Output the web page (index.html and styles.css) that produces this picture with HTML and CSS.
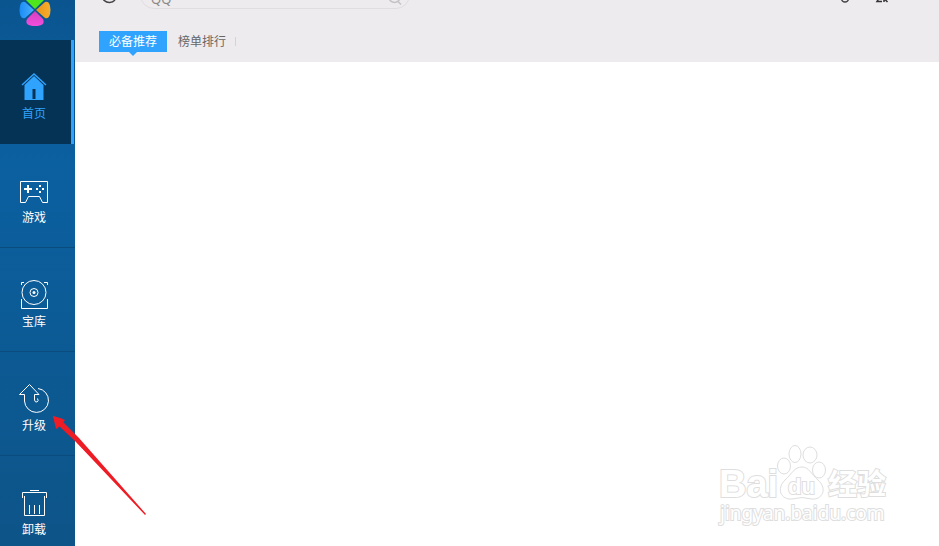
FILE: index.html
```html
<!DOCTYPE html>
<html lang="zh-CN">
<head>
    <meta charset="UTF-8">
    <meta name="viewport" content="width=device-width, initial-scale=1.0">
    <title>必备推荐</title>
    <link rel="stylesheet" href="styles.css">
</head>
<body>
    <div class="app">
        <nav class="sidebar">
            <div class="logo">
                <svg width="36" height="36" viewBox="0 0 36 36">
                    <defs>
                        <linearGradient id="blue"><stop offset="0" stop-color="#1c8cf5"/><stop offset="1" stop-color="#49b0ff"/></linearGradient>
                        <linearGradient id="orange"><stop offset="0" stop-color="#e8951a"/><stop offset="1" stop-color="#f8ad2c"/></linearGradient>
                        <linearGradient id="pink" x2="0" y2="1"><stop offset="0" stop-color="#d63fbf"/><stop offset="1" stop-color="#f04fdc"/></linearGradient>
                    </defs>
                    <path fill="#4fe61c" d="M18 19 L9 10 Q6 3 18 2 Q30 3 27 10 Z"/>
                    <path fill="url(#blue)" d="M17 20 L8 28 Q3 30 2.500 20 Q3 10 8 12 Z"/>
                    <path fill="url(#orange)" d="M19 20 L28 12 Q33 10 33.500 20 Q33 30 28 28 Z"/>
                    <path fill="url(#pink)" d="M18 21 L26 29 Q29 36 18 36 Q7 36 10 29 Z"/>
                </svg>
            </div>
            <a class="nav-item active" href="#home">
                <svg width="30" height="30" viewBox="0 0 30 30">
                    <path fill="none" stroke="#30a3ff" stroke-width="1.500" d="M3 13 L15 2 L27 13"/>
                    <path fill="#30a3ff" d="M15 4 L24.500 13 V28 H5.500 V13 Z"/>
                    <path fill="#043356" d="M13.500 17 H16.500 V27 H13.500 Z"/>
                </svg>
                <span>首页</span>
            </a>
            <a class="nav-item" href="#games">
                <svg width="30" height="30" viewBox="0 0 30 30">
                    <path fill="none" stroke="#fff" d="M1.500 5.500 H28.500 V26.500 H23.500 L20.500 20.500 H9.500 L6.500 26.500 H1.500 Z"/>
                    <path fill="#fff" d="M8 9 h2 v3 h3 v2 h-3 v3 h-2 v-3 h-3 v-2 h3z M20 9 h2 v2 h-2z M20 15 h2 v2 h-2z M17 12 h2 v2 h-2z M23 12 h2 v2 h-2z"/>
                </svg>
                <span>游戏</span>
            </a>
            <a class="nav-item" href="#library">
                <svg width="30" height="30" viewBox="0 0 30 30">
                    <g fill="none" stroke="#fff">
                        <circle cx="15" cy="12.500" r="12"/>
                        <circle cx="15" cy="12.500" r="4"/>
                        <path d="M2.500 5 V2.500 H5 M25 2.500 H28.500 V5 M2.500 19 V28.500 H28.500 V19"/>
                    </g>
                    <circle cx="15" cy="12.500" r="1.500" fill="#fff"/>
                </svg>
                <span>宝库</span>
            </a>
            <a class="nav-item" href="#upgrade">
                <svg width="30" height="30" viewBox="0 0 30 30">
                    <path fill="none" stroke="#fff" d="M19 4.500 A12 12 0 1 1 5.500 17 V10.500 H0.500 L10.500 0.500 L20 10.500 H15.500 V16 Q16 18.500 18 18 Q20 17 18.500 14.500"/>
                </svg>
                <span>升级</span>
            </a>
            <a class="nav-item" href="#uninstall">
                <svg width="30" height="30" viewBox="0 0 30 30">
                    <path fill="none" stroke="#fff" d="M11 2.500 H20 M3.500 10 V4.500 H27.500 V10 M5.500 8 V27.500 H25.500 V8 M10.500 17 V26 M15.500 17 V26 M20.500 17 V26"/>
                </svg>
                <span>卸载</span>
            </a>
        </nav>
        <main class="main">
            <header class="header">
                <div class="toolbar">
                    <button class="icon-btn" type="button" aria-label="刷新">
                        <svg width="18" height="20" viewBox="0 0 18 20">
                            <path fill="none" stroke="#444" stroke-width="1.500" d="M15 5 A7.500 7.500 0 1 0 15 15"/>
                        </svg>
                    </button>
                    <div class="search">
                        <input type="text" value="QQ" aria-label="搜索">
                        <svg width="14" height="14" viewBox="0 0 14 14">
                            <path fill="none" stroke="#c4c3c6" stroke-width="1.500" d="M10 9.500 L13 12.500 M1 5 a5.500 5.500 0 1 0 11 0 a5.500 5.500 0 1 0 -11 0"/>
                        </svg>
                    </div>
                    <div class="tools">
                        <button class="icon-btn" type="button" aria-label="消息">
                            <svg width="14" height="16" viewBox="0 0 14 16">
                                <circle cx="8" cy="11.500" r="3.500" fill="none" stroke="#444" stroke-width="1.500"/>
                            </svg>
                        </button>
                        <button class="icon-btn" type="button" aria-label="下载">
                            <svg width="14" height="16" viewBox="0 0 14 16">
                                <path fill="none" stroke="#333" stroke-width="1.500" d="M6 8 L2 14.500 H7 M9 11 V15 M9 13 H10.500 L12.500 15 M10.500 13 L12.500 11"/>
                            </svg>
                        </button>
                    </div>
                </div>
                <div class="tabs">
                    <a class="tab selected" href="#recommend">必备推荐</a>
                    <a class="tab" href="#rank">榜单排行</a>
                </div>
            </header>
        </main>
        <svg class="arrow" width="94" height="100" viewBox="0 0 94 100">
            <path fill="#ee1c25" d="M1 1 L11 4 L10 6 L27 23 L94 99 L93 100 L23 26 L7 11 L5 14 Z"/>
            <path fill="#ee1c25" d="M1 1 L13 5 L9 10 L4 14 Z"/>
        </svg>
        <svg class="watermark" width="180" height="90" viewBox="0 0 180 90">
            <g class="paw">
                <ellipse cx="69" cy="26" rx="6.500" ry="8"/>
                <ellipse cx="80" cy="14" rx="6" ry="8.500"/>
                <ellipse cx="95" cy="15" rx="7" ry="8"/>
                <ellipse cx="104" cy="30" rx="6.500" ry="8"/>
                <path d="M87 27 C94 27 96 34 103 40 C113 49 107 60 97 59 Q87 56 77 59 C66 60 61 49 70 40 C77 34 79 27 87 27 Z"/>
            </g>
            <text class="brand" x="4" y="57">Bai</text>
            <text class="du" x="73" y="54">du</text>
            <text class="brand-cn" x="113" y="55">经验</text>
            <text class="site" x="5" y="80">jingyan.baidu.com</text>
        </svg>
    </div>
</body>
</html>
```

FILE: styles.css
```css
* {
    box-sizing: border-box;
}
body {
    margin: 0;
    font-family: "Liberation Sans", "Noto Sans CJK SC", sans-serif;
    font-size: 12px;
    background: #fff;
}
.app {
    position: relative;
    display: flex;
    height: 100vh;
    overflow: hidden;
}
.sidebar {
    flex: 0 0 75px;
    background: linear-gradient(#0a5590, #0b60a0 30%, #0d5488);
}
.logo {
    display: flex;
    justify-content: center;
    align-items: flex-end;
    height: 40px;
    padding-right: 6px;
    padding-bottom: 14px;
}
.nav-item {
    display: flex;
    flex-direction: column;
    align-items: center;
    height: 104px;
    padding-top: 32px;
    padding-right: 7px;
    gap: 4px;
    border-bottom: 1px solid #0a4c7e;
    color: #fff;
    line-height: 16px;
    text-decoration: none;
}
.nav-item.active {
    border-bottom: none;
    box-shadow: inset -1px 0 #0a5590, inset -4px 0 #30a3ff;
    background: #043356;
    color: #30a3ff;
}
.main {
    flex: 1;
    min-width: 0;
}
.header {
    display: flow-root;
    height: 62px;
    background: #eeebee;
}
.toolbar {
    display: flex;
    align-items: center;
    height: 28px;
    margin-top: -19px;
    padding: 0 50px 0 25px;
}
.icon-btn {
    display: flex;
    padding: 0;
    border: none;
    background: none;
    cursor: pointer;
}
.search {
    display: flex;
    align-items: center;
    width: 270px;
    height: 28px;
    margin-left: 22px;
    padding: 0 7px 0 10px;
    border: 1px solid #e0dde0;
    border-radius: 14px;
}
.search svg {
    margin-top: 8px;
}
.search input {
    flex: 1;
    min-width: 0;
    height: 26px;
    padding: 8px 0 0;
    border: none;
    outline: none;
    background: none;
    color: #888;
    font: 13px "Noto Sans", sans-serif;
}
.tools {
    display: flex;
    gap: 24px;
    margin-left: auto;
}
.tabs {
    display: flex;
    align-items: center;
    margin-top: 22px;
    padding-left: 24px;
}
.tab {
    position: relative;
    padding: 1px 10px 0;
    color: #666;
    line-height: 20px;
    text-decoration: none;
}
.tab.selected {
    margin-right: 1px;
    background: #30a3ff;
    color: #fff;
}
.tab.selected::after {
    content: "";
    position: absolute;
    left: 50%;
    top: 100%;
    margin-left: -4px;
    border: 4px solid transparent;
    border-top-color: #30a3ff;
}
.tab:last-child::after {
    content: "";
    position: absolute;
    right: 0;
    top: 6px;
    width: 1px;
    height: 9px;
    background: #d5d3d6;
}
.arrow {
    position: absolute;
    left: 52px;
    top: 415px;
}
.watermark {
    position: absolute;
    right: 44px;
    bottom: 16px;
    fill: #fff;
    stroke: #dedede;
    stroke-width: 1px;
}
.watermark text {
    paint-order: stroke;
    stroke-width: 2px;
}
.brand {
    font: bold 38px "Liberation Sans", sans-serif;
}
.du {
    font: bold 22px "Liberation Sans", sans-serif;
}
.brand-cn {
    font: bold 29px "Noto Sans CJK SC", sans-serif;
}
.site {
    font: 19px "Noto Sans", sans-serif;
}
```
